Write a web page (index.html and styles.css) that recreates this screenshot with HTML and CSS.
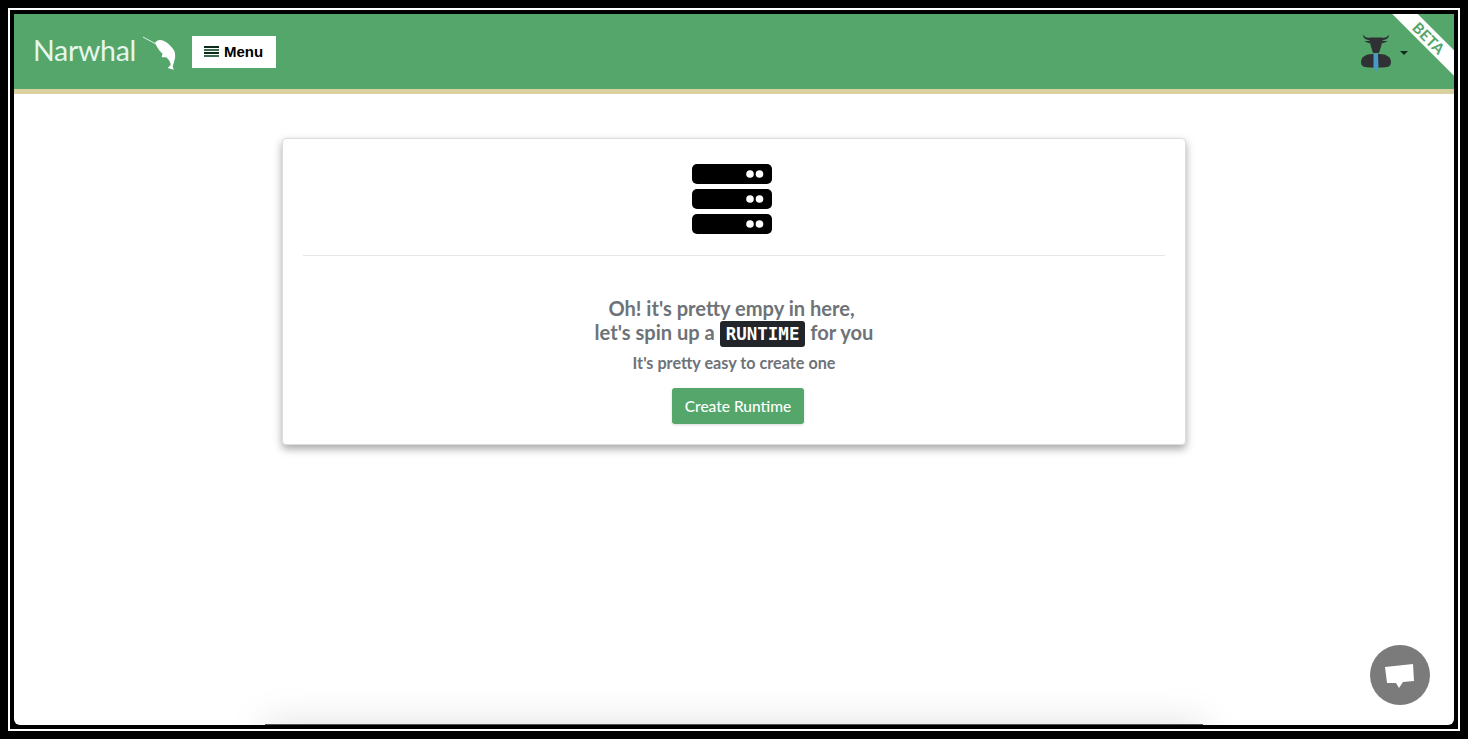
FILE: index.html
```html
<!DOCTYPE html>
<html lang="en">
<head>
  <meta charset="UTF-8">
  <meta name="viewport" content="width=device-width, initial-scale=1">
  <title>Narwhal</title>
  <link rel="stylesheet" href="styles.css">
</head>
<body>

<div class="frame">
  <div class="screen">
    <header class="topbar">
      <a class="brand" href="#">Narwhal</a>
      <svg class="brand-logo" width="38" height="38" viewBox="0 0 38 38">
        <path class="tusk" d="M3 2 L16 9"/>
        <path class="whale" d="M15 8 C16 6 18 5 20 5 C24 5 28 8 31.7 12.3 C34 15 35 17 35 19 C35.5 22 35 24 34.3 25.7 C33.8 28 33.2 30 32.7 31.3 L33.7 34.7 L27.7 33 L30.7 30 C30.5 28 30 27 29.3 25.7 C28 24 27 23 26 22.3 L21.7 22.3 L22.5 18.5 C20 16.5 18 14 15 8 Z"/>
      </svg>
      <button class="menu-btn">
        <svg width="15" height="11" viewBox="0 0 15 11">
          <rect y="0" width="15" height="2" fill="#0d2a1a"/>
          <rect y="3" width="15" height="2" fill="#3a6b4d"/>
          <rect y="6" width="15" height="2" fill="#0d2a1a"/>
          <rect y="9" width="15" height="2" fill="#3a6b4d"/>
        </svg>
        Menu
      </button>
      <div class="user">
        <svg width="34" height="40" viewBox="0 0 34 40">
          <path class="horn" d="M4 2.5 C5 5 8 6 12 6 L12 8 C8 8.5 4 7 4 2.5 Z M30 2.5 C29 5 26 6 22 6 L22 8 C26 8.5 30 7 30 2.5 Z"/>
          <path class="horn" d="M5 9.5 L11 8.5 L11.5 11.5 Z M29 9.5 L23 8.5 L22.5 11.5 Z"/>
          <path class="horn" d="M10.5 5.5 L23.5 5.5 L22.5 13 L20 21 L14 21 L11.5 13 Z"/>
          <path class="horn" d="M2 30 C2 25 7 22 13 22 L21 22 C27 22 32 25 32 30 C32 35 28 35.5 22 35.5 L12 35.5 C6 35.5 2 35 2 30 Z"/>
          <path class="tie" d="M14.5 21.5 L19 21.5 L19.5 35 L17 40 L14.5 35 Z"/>
        </svg>
        <span class="caret"></span>
      </div>
      <div class="ribbon">BETA</div>
    </header>

    <main class="content">
      <section class="card">
        <div class="card-icon">
          <svg width="80" height="70" viewBox="0 0 80 70">
            <rect width="80" height="20" y="0" rx="5"/>
            <rect width="80" height="20" y="25" rx="5"/>
            <rect width="80" height="20" y="50" rx="5"/>
            <g fill="#fff">
              <circle cx="58" cy="10" r="3.8"/><circle cx="67.5" cy="10" r="3.8"/>
              <circle cx="58" cy="35" r="3.8"/><circle cx="67.5" cy="35" r="3.8"/>
              <circle cx="58" cy="60" r="3.8"/><circle cx="67.5" cy="60" r="3.8"/>
            </g>
          </svg>
        </div>
        <hr class="divider">
        <h2 class="empty-title">Oh! it's pretty empy in here,&nbsp;<br>let's spin up a <code class="tag">RUNTIME</code> for you</h2>
        <p class="empty-sub">It's pretty easy to create one</p>
        <button class="create-btn">Create Runtime</button>
      </section>
    </main>

    <div class="next-card"></div>

    <button class="chat-btn" aria-label="Chat">
      <svg width="60" height="60" viewBox="0 0 60 60">
        <path fill="#fff" d="M15 22 L43 19 L44 36 L33 37 L29 43 L26 38 L17 38 Z"/>
      </svg>
    </button>
  </div>
</div>

</body>
</html>
```

FILE: styles.css
```css
html, body {
  height: 100%;
}
body {
  margin: 0;
  padding: 8px;
  box-sizing: border-box;
  background-color: #000;
  font-family: 'Lato', sans-serif;
}
.frame {
  height: 100%;
  box-sizing: border-box;
  border: 2px solid #fff;
  padding: 4px;
  background-color: #000;
}
.screen {
  position: relative;
  height: 100%;
  display: flex;
  flex-direction: column;
  overflow: hidden;
  background-color: #fff;
  border-radius: 0 0 6px 6px;
}
.topbar {
  position: relative;
  flex: none;
  display: flex;
  align-items: center;
  height: 75px;
  padding-left: 19px;
  padding-right: 45px;
  background-color: #54a66a;
  border-bottom: 5px solid #d9d2a0;
  overflow: hidden;
}
.brand {
  width: 103px;
  margin-bottom: 4px;
  color: #e6f6ea;
  font-size: 28.5px;
  font-weight: 400;
  letter-spacing: -0.3px;
  text-decoration: none;
}
.brand-logo {
  flex: none;
  margin-left: 4px;
  margin-top: 5px;
}
.tusk {
  stroke: #dff0e3;
  stroke-width: 1;
  fill: none;
}
.whale {
  fill: #fff;
}
.menu-btn {
  display: flex;
  align-items: center;
  gap: 5px;
  height: 32px;
  width: 84px;
  margin-left: 14px;
  padding: 0 0 0 12px;
  border: none;
  background-color: #fff;
  color: #000;
  font-family: 'Liberation Sans', sans-serif;
  font-size: 15px;
  font-weight: bold;
}
.user {
  display: flex;
  align-items: center;
  margin-left: auto;
}
.horn {
  fill: #2f3134;
}
.tie {
  fill: #4a9ac7;
}
.caret {
  width: 0;
  height: 0;
  margin-top: 2px;
  margin-left: 7px;
  margin-right: 1px;
  border-left: 4.5px solid transparent;
  border-right: 4.5px solid transparent;
  border-top: 4.5px solid #13291b;
}
.ribbon {
  position: absolute;
  top: 15px;
  right: -25px;
  width: 100px;
  height: 18px;
  line-height: 18px;
  text-align: center;
  background-color: #fff;
  color: #54a66a;
  font-size: 15px;
  font-weight: 700;
  letter-spacing: 0.3px;
  transform: rotate(45deg);
}
.content {
  flex: 1;
  padding-top: 44px;
}
.card {
  width: 902px;
  margin: 0 auto;
  padding: 25px 0 20px;
  background-color: #fff;
  border: 1px solid #ddd;
  border-radius: 4px;
  box-shadow: 0 4px 8px rgba(0,0,0,0.35);
  text-align: center;
}
.card-icon {
  height: 70px;
  padding-right: 4px;
}
.divider {
  margin: 21px 20px 40px;
  border: none;
  border-top: 1px solid #e6e6e6;
}
.empty-title {
  margin: 0;
  color: #6e7378;
  font-size: 20.1px;
  font-weight: bold;
  line-height: 24px;
}
.tag {
  display: inline-block;
  height: 26px;
  margin: -2px 0;
  line-height: 26px;
  padding: 0 6px;
  vertical-align: 0;
  background-color: #212529;
  border-radius: 3px;
  color: #fff;
  font-family: 'DejaVu Sans Mono', monospace;
  font-size: 17.5px;
  font-weight: bold;
}
.empty-sub {
  margin: 6px 0 13px;
  color: #6e7378;
  font-size: 16.2px;
  font-weight: bold;
  line-height: 24px;
}
.create-btn {
  height: 36px;
  width: 132px;
  margin-left: 8px;
  border: none;
  border-radius: 3px;
  background-color: #54a66a;
  color: #fff;
  font-family: 'Lato', sans-serif;
  font-size: 15.5px;
  font-weight: 500;
  box-shadow: 0 1px 3px rgba(0,0,0,0.15);
}
/* top edge of the next card, the rest is below the fold */
.next-card {
  flex: none;
  width: 938px;
  height: 40px;
  margin: 0 auto -39px;
  background-color: #555;
  box-shadow: 0 0 40px rgba(0,0,0,0.13);
}
.chat-btn {
  position: absolute;
  right: 24px;
  bottom: 20px;
  width: 60px;
  height: 60px;
  padding: 0;
  border: none;
  border-radius: 50%;
  background-color: #7b7b7b;
}
.chat-btn svg {
  display: block;
}
```
